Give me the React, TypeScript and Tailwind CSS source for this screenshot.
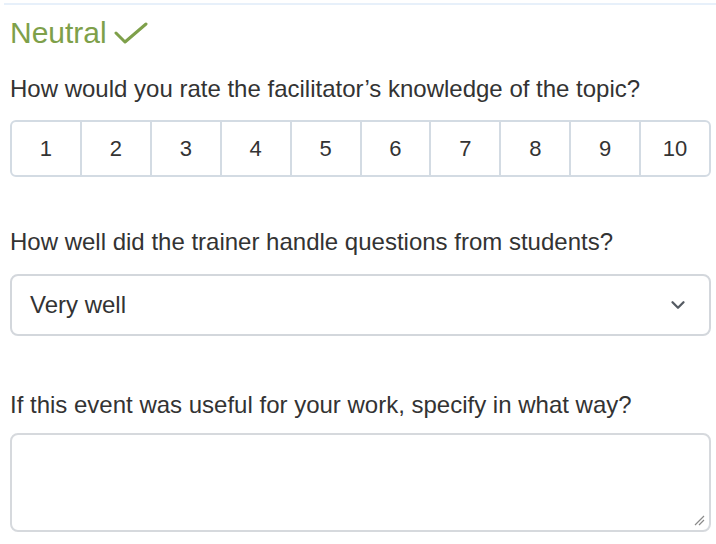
import { ChevronDown } from 'lucide-react';

const ratings = [1, 2, 3, 4, 5, 6, 7, 8, 9, 10];

export default function App() {
  return (
    <div className="w-[716px] h-[544px] bg-white overflow-hidden text-[#333333]" style={{ fontFamily: '"Liberation Sans", Arial, sans-serif' }}>
      <div className="ml-[4px] mt-[3px] h-[2px] bg-[#e7f0fa]" />

      <div className="pl-[10px] pr-[5px]">
        {/* Status */}
        <div className="flex items-center gap-[7px] mt-[11px] text-[#7ea04a]">
          <span className="text-[30px] leading-[34px]">Neutral</span>
          <svg width="34" height="24" viewBox="0 0 34 24" fill="none" stroke="currentColor" strokeWidth="3" strokeLinecap="round" strokeLinejoin="round" className="mt-[2px]">
            <path d="M2 11 L11 20 L32 2" />
          </svg>
        </div>

        {/* Rating */}
        <p className="mt-[25px] text-[24px] leading-[28px] whitespace-nowrap">How would you rate the facilitator’s knowledge of the topic?</p>
        <div className="mt-[17px] flex h-[57px] border-2 border-[#d3dbe3] rounded-[6px] overflow-hidden">
          {ratings.map((n) => (
            <div
              key={n}
              className="flex-1 flex items-center justify-center text-[22px] border-r-2 border-[#d3dbe3] last:border-r-0"
            >
              {n}
            </div>
          ))}
        </div>

        {/* Select */}
        <p className="mt-[51px] text-[24px] leading-[28px] whitespace-nowrap">How well did the trainer handle questions from students?</p>
        <div className="mt-[18px] flex items-center justify-between h-[62px] border-2 border-[#d3d7dc] rounded-[8px] pl-[18px] pr-[20px]">
          <span className="text-[24px]">Very well</span>
          <ChevronDown className="w-[22px] h-[22px] text-[#555b63]" strokeWidth={2.5} />
        </div>

        {/* Textarea */}
        <p className="mt-[55px] text-[24px] leading-[28px] whitespace-nowrap">If this event was useful for your work, specify in what way?</p>
        <div className="relative mt-[14px] h-[99px] border-2 border-[#d6d9dd] rounded-[8px]">
          <svg className="absolute right-[4px] bottom-[4px]" width="12" height="12" viewBox="0 0 12 12" stroke="#8a8a8a" strokeWidth="1.2">
            <path d="M11 2 L2 11 M11 6 L6 11" />
          </svg>
        </div>
      </div>
    </div>
  );
}
